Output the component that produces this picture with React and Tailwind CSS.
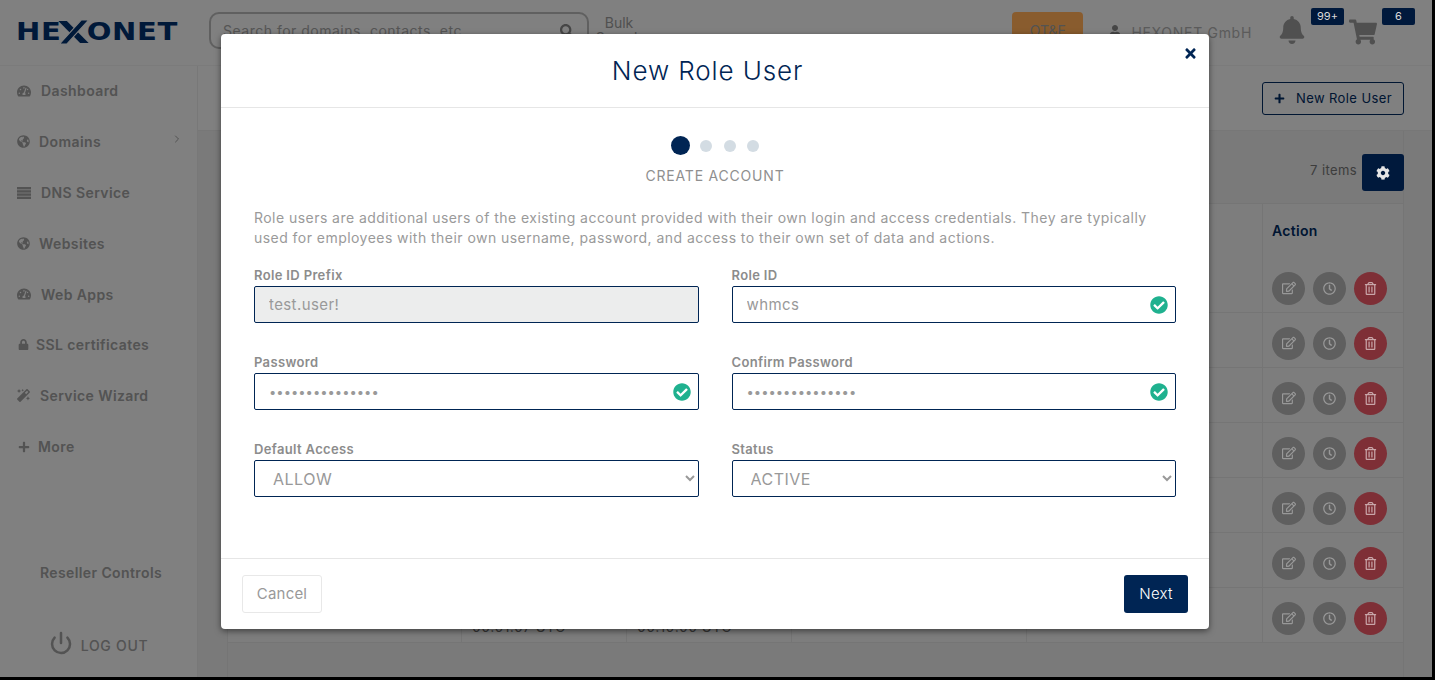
import React from "react";
import { FaTachometerAlt, FaGlobeAmericas, FaLock, FaMagic, FaPlus, FaBell, FaShoppingCart, FaUser, FaSearch, FaCog, FaRegEdit, FaRegClock, FaRegTrashAlt, FaTimes, FaCheckCircle } from "react-icons/fa";
import { ChevronRight, Power } from "lucide-react";

const font = { fontFamily: "Inter, 'Noto Sans', sans-serif" };

function DnsIcon() {
  return (
    <svg width="14" height="12" viewBox="0 0 14 12" fill="currentColor">
      <rect x="0" y="0" width="14" height="2.4" />
      <rect x="0" y="3.2" width="14" height="2.4" />
      <rect x="0" y="6.4" width="14" height="2.4" />
      <rect x="0" y="9.6" width="14" height="2.4" />
    </svg>
  );
}

function SideItem({ icon, label, gap, arrow, short }) {
  return (
    <div className={`${short ? "h-[50px]" : "h-[51px]"} flex items-center pl-4 pr-4 font-semibold text-[14px] tracking-[0.4px]`}>
      <span className="w-[15px] flex justify-center shrink-0">{icon}</span>
      <span className={gap}>{label}</span>
      {arrow && <ChevronRight className="ml-auto -mt-[6px] mr-[-2px]" size={12} />}
    </div>
  );
}

function Logo() {
  return (
    <div className="flex items-center text-[#002a60] font-bold text-[24px] leading-none origin-left scale-x-[1.21]" style={{ fontFamily: "'DejaVu Sans', sans-serif" }}>
      <span className="tracking-[0.5px]">HE</span>
      <svg width="27" height="26" viewBox="0 0 27 26" className="mx-[-3px]">
        <path d="M1 2h7l18 22h-7z" fill="#002a60" />
        <path d="M26 1h-6L2 25h6z" fill="#002a60" stroke="#d5d5d5" strokeWidth="1" />
      </svg>
      <span className="tracking-[0.5px]">ONET</span>
    </div>
  );
}

function Row({ last }) {
  return (
    <div className="grid grid-cols-[234px_165px_165px_235px_236px_140px] h-[55px] border-b border-[#c3c3c3]">
      <div className="border-r border-[#c3c3c3]" />
      <div className="border-r border-[#c3c3c3] pl-[10px] pt-[28px] text-[14px] tracking-[0.3px] text-[#5c5c5c] whitespace-nowrap">{last ? "00:01:07 UTC" : ""}</div>
      <div className="border-r border-[#c3c3c3] pl-[10px] pt-[28px] text-[14px] tracking-[0.3px] text-[#5c5c5c] whitespace-nowrap">{last ? "00:10:00 UTC" : ""}</div>
      <div className="border-r border-[#c3c3c3]" />
      <div className="border-r border-[#c3c3c3]" />
      <div className="flex items-center gap-[8px] pl-[9px] pt-[6px] text-white">
        <span className="w-[33px] h-[33px] rounded-full bg-[#9e9e9e] flex items-center justify-center text-[14px]"><FaRegEdit /></span>
        <span className="w-[33px] h-[33px] rounded-full bg-[#9e9e9e] flex items-center justify-center text-[13px]"><FaRegClock /></span>
        <span className="relative z-10 w-[33px] h-[33px] rounded-full bg-[#7e2f36] flex items-center justify-center text-[13px] text-[#c9a6a9]"><FaRegTrashAlt /></span>
      </div>
    </div>
  );
}

function Field({ label, value, check, disabled, password, select }) {
  return (
    <div className="flex flex-col">
      <label className="text-[13px] leading-[18px] font-semibold text-[#8c8c8c] mb-[2px] tracking-[0.35px]">{label}</label>
      <div className="relative">
        {select ? (
          <select defaultValue={value} className="w-full h-[37px] border border-[#002554] rounded-[2px] pl-[14px] pr-1 text-[16px] text-[#999] bg-white tracking-[0.5px]" style={font}>
            <option>{value}</option>
          </select>
        ) : (
          <input
            readOnly
            type={password ? "password" : "text"}
            value={value}
            disabled={disabled}
            className={`w-full h-[37px] border border-[#002554] rounded-[2px] px-[14px] text-[#999] ${password ? "text-[13px]" : "text-[15px] tracking-[0.4px]"} ${disabled ? "bg-[#eceded]" : "bg-white"}`}
            style={font}
          />
        )}
        {check && <FaCheckCircle className="absolute right-[8px] top-[10px] text-[#1fb18f] text-[18px]" />}
      </div>
    </div>
  );
}

export default function App() {
  return (
    <div className="h-[680px] w-[1435px] bg-black overflow-hidden" style={font}>
      <div className="relative w-[1432px] h-[677px] bg-[#cbcbcb] flex flex-col overflow-hidden">
        {/* page behind */}
        <header className="h-[66px] shrink-0 bg-[#d5d5d5] border-b border-[#cdcdcd] flex items-center">
          <div className="w-[209px] pl-[16px] shrink-0 -mt-[1px]"><Logo /></div>
          <div className="w-[380px] h-[37px] mt-[-4px] border-2 border-[#a0a0a0] rounded-[10px] flex items-center pl-[12px] pr-[13px] text-[#8e8e8e] text-[14px] shrink-0">
            <span className="tracking-[0.5px]">Search for domains, contacts, etc</span>
            <FaSearch className="ml-auto text-[#757575] text-[14px]" />
          </div>
          <div className="w-[60px] text-center text-[14px] leading-[15px] text-[#858585] -mt-[6px]">Bulk<br />Search</div>
          <div className="ml-auto flex items-center relative">
            <div className="w-[71px] h-[37px] rounded-[4px] bg-[#e59a4e] text-[#8a8a8a] text-[14px] flex items-center justify-center mr-[26px] mt-[-4px]">OT&E</div>
            <FaUser className="text-[#757575] text-[12px] mr-[10px] -mt-[3px]" />
            <span className="text-[#989898] text-[14px] tracking-[0.7px] mr-[26px]">HEXONET GmbH</span>
            <FaBell className="text-[#858585] text-[28px] -mt-[6px] mr-[5px]" />
            <span className="relative z-10 mb-[32px] h-[17px] w-[33px] rounded-[2px] bg-[#00193c] text-[#d8d8d8] text-[11px] flex items-center justify-center">99+</span>
            <FaShoppingCart className="text-[#858585] text-[28px] ml-[5px] -mt-[2px]" />
            <span className="relative z-10 mb-[32px] ml-[5px] h-[17px] w-[33px] rounded-[2px] bg-[#00193c] text-[#d8d8d8] text-[11px] flex items-center justify-center mr-[17px]">6</span>
          </div>
        </header>
        <div className="flex flex-1 min-h-0">
          <aside className="w-[198px] shrink-0 bg-[#d5d5d5] border-r border-[#c8c8c8] flex flex-col text-[#8a8a8a]">
            <div className="-mt-[1px]">
              <SideItem icon={<FaTachometerAlt size={14} />} label="Dashboard" gap="ml-[10px]" />
              <SideItem icon={<FaGlobeAmericas size={13} />} label="Domains" gap="ml-[8px]" arrow />
              <SideItem icon={<DnsIcon />} label="DNS Service" gap="ml-[10px]" />
              <SideItem icon={<FaGlobeAmericas size={13} />} label="Websites" gap="ml-[8px]" />
              <SideItem icon={<FaTachometerAlt size={14} />} label="Web Apps" gap="ml-[10px]" short />
              <SideItem icon={<FaLock size={11} />} label="SSL certificates" gap="ml-[5px]" />
              <SideItem icon={<FaMagic size={13} />} label="Service Wizard" gap="ml-[9px]" />
              <SideItem icon={<FaPlus size={12} />} label="More" gap="ml-[7px]" />
            </div>
            <div className="mt-[90px] pl-[5px] text-center font-semibold text-[14px] tracking-[0.4px]">Reseller Controls</div>
            <div className="mt-[52px] flex items-center justify-center gap-[8px] font-medium text-[14px] tracking-[0.7px]">
              <Power size={24} strokeWidth={2.5} className="-mt-[6px]" />
              <span>LOG OUT</span>
            </div>
          </aside>
          <main className="flex-1 min-w-0 flex flex-col">
            <div className="h-[65px] shrink-0 bg-[#d5d5d5] border-b border-[#c6c6c6] flex items-center justify-end pr-[28px]">
              <button className="h-[33px] w-[142px] mt-[1px] border border-[#002554] rounded-[3px] flex items-center justify-center gap-[11px] text-[#002554] text-[13px] tracking-[0.4px]">
                <FaPlus size={11} /> New Role User
              </button>
            </div>
            <div className="flex-1 ml-[29px] mr-[28px] border-x border-[#c3c3c3] min-h-0">
              <div className="h-[72px] flex items-center justify-end gap-[5px] pt-[11px]">
                <span className="text-[13px] tracking-[0.4px] text-[#666666] -mt-[3px]">7 items</span>
                <button className="relative z-10 mr-[-1px] w-[42px] h-[37px] rounded-[3px] bg-[#00193c] text-[#e6e6e6] flex items-center justify-center text-[14px]"><FaCog /></button>
              </div>
              <div className="bg-[#d1d1d1]">
                <div className="h-[55px] grid grid-cols-[1035px_140px] border-t border-[#c3c3c3]">
                  <div className="border-r border-[#c3c3c3]" />
                  <div className="pl-[9px] pt-[16px] text-[14px] font-semibold tracking-[0.3px] text-[#002554]">Action</div>
                </div>
                {[0, 1, 2, 3, 4, 5].map((i) => <Row key={i} />)}
                <Row last />
              </div>
            </div>
          </main>
        </div>

        {/* backdrop */}
        <div className="absolute inset-0 bg-black/40" />

        {/* modal */}
        <div className="absolute z-20 left-[221px] top-[34px] w-[988px] h-[595px] bg-white rounded-[4px] shadow-[0_2px_6px_rgba(0,0,0,0.5)] flex flex-col">
          <div className="relative h-[74px] shrink-0 border-b border-[#e6e6e6] flex items-center justify-center pr-[15px] text-[26px] font-light text-[#002554] tracking-[0.9px]">
            New Role User
            <FaTimes className="absolute right-[11px] top-[12px] text-[#002554] text-[15px]" />
          </div>
          <div className="flex-1 px-[33px]">
            <div className="flex items-center justify-center mt-[28px]">
              <span className="w-[19px] h-[19px] rounded-full bg-[#002554] mr-[10px]" />
              <span className="w-[12px] h-[12px] rounded-full bg-[#d3dce3] mr-[11.5px]" />
              <span className="w-[12px] h-[12px] rounded-full bg-[#d3dce3] mr-[11.5px]" />
              <span className="w-[12px] h-[12px] rounded-full bg-[#d3dce3]" />
            </div>
            <div className="text-center text-[14px] tracking-[0.8px] text-[#8f8f8f] mt-[12px] leading-[18px]">CREATE ACCOUNT</div>
            <p className="text-[14px] leading-[20px] text-[#9a9a9a] mt-[23px] tracking-[0.455px]">
              Role users are additional users of the existing account provided with their own login and access credentials. They are typically used for employees with their own username, password, and access to their own set of data and actions.
            </p>
            <div className="grid grid-cols-2 gap-x-[33px] gap-y-[30px] mt-[18px]">
              <Field label="Role ID Prefix" value="test.user!" disabled />
              <Field label="Role ID" value="whmcs" check />
              <Field label="Password" value="passwordpasswor" password check />
              <Field label="Confirm Password" value="passwordpasswor" password check />
              <Field label="Default Access" value="ALLOW" select />
              <Field label="Status" value="ACTIVE" select />
            </div>
          </div>
          <div className="h-[71px] shrink-0 border-t border-[#e6e6e6] flex items-center justify-between px-[21px]">
            <button className="w-[80px] h-[38px] border border-[#e8e8e8] rounded-[3px] text-[15px] text-[#999] tracking-[0.2px]">Cancel</button>
            <button className="w-[64px] h-[38px] rounded-[3px] bg-[#002554] text-[15px] text-white tracking-[0.3px] font-light">Next</button>
          </div>
        </div>
      </div>
    </div>
  );
}
